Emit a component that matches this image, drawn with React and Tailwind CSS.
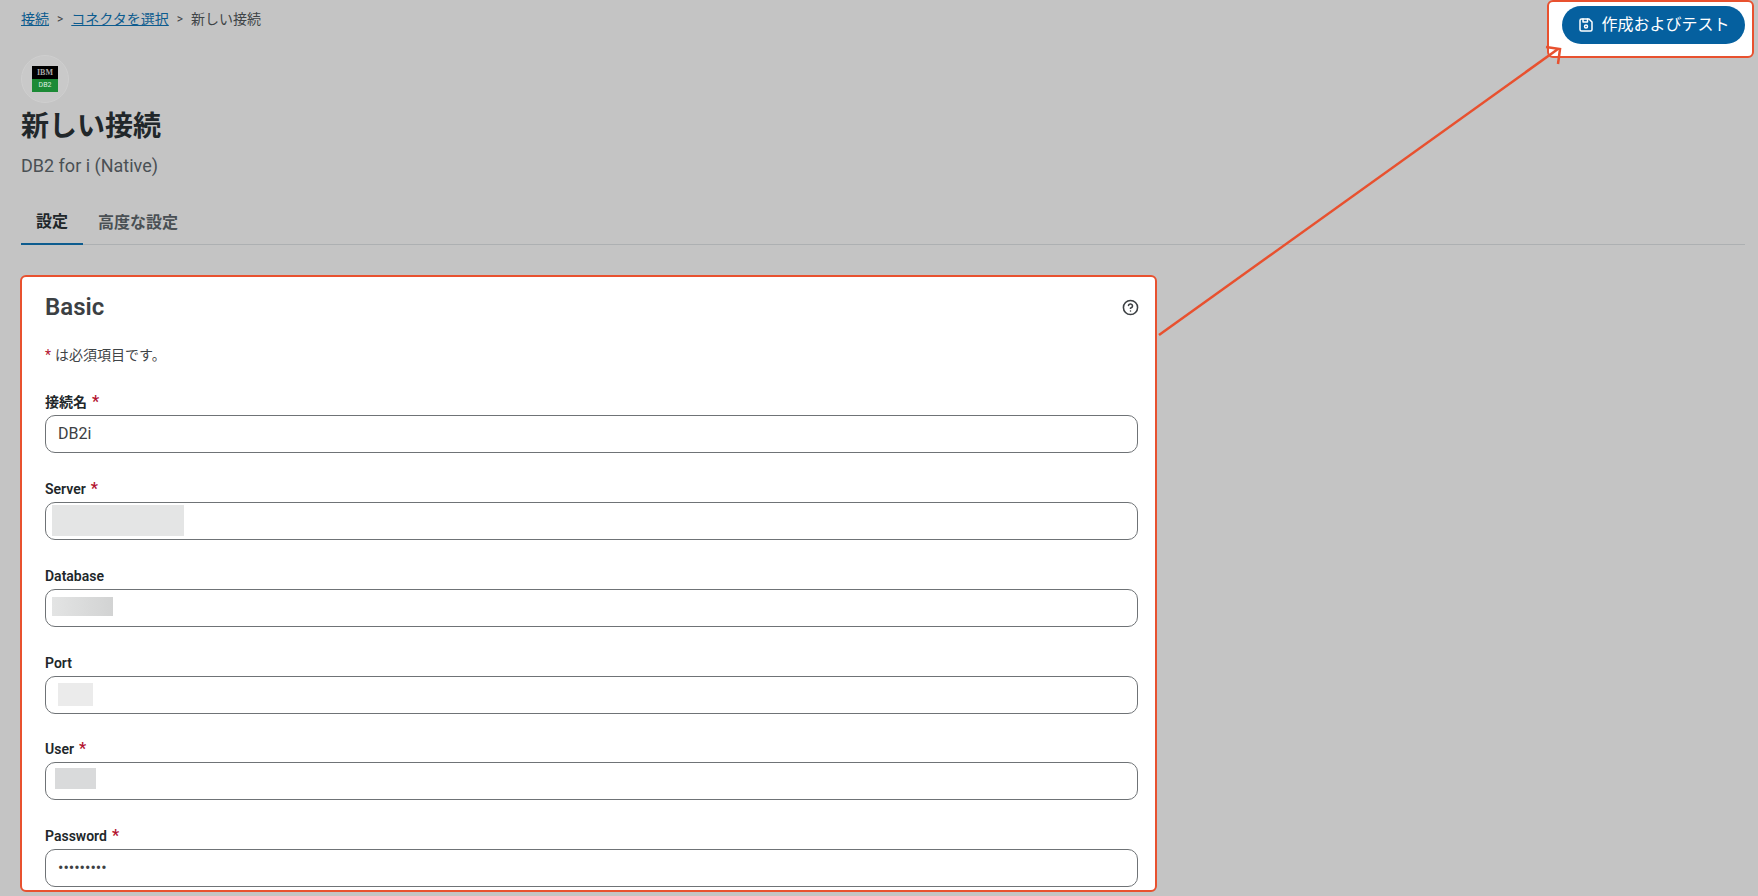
import React from 'react';
import { CircleHelp } from 'lucide-react';
import { TbDeviceFloppy } from 'react-icons/tb';

const Req = () => <span className="text-[#b3122f] text-[16px] leading-none ml-[5px]">*</span>;

const Field = ({ label, required, value, mt, children }) => (
  <div className={mt}>
    <label className="flex items-center h-[20px] text-[14px] font-semibold text-[#21272a] leading-none">
      {label}
      {required && <Req />}
    </label>
    <div className="relative flex items-center mt-[3px] h-[38px] rounded-[10px] border border-[#6f7376] bg-white px-[12px] text-[16px] text-[#3c4043]">
      {value}
      {children}
    </div>
  </div>
);

export default function App() {
  return (
    <div className="relative h-[896px] overflow-hidden bg-[#c4c4c4] pl-[21px] pr-[4px] font-['Roboto','Noto_Sans_CJK_JP',sans-serif]">
      {/* Header row */}
      <div className="flex items-start justify-between h-[55px]">
        <nav className="flex items-center gap-[8px] mt-[9px] h-[20px] text-[14px] text-[#3f4447]">
          <a className="text-[#0d5c8f] underline">接続</a>
          <span className="text-[12px]">&gt;</span>
          <a className="text-[#0d5c8f] underline">コネクタを選択</a>
          <span className="text-[12px]">&gt;</span>
          <span>新しい接続</span>
        </nav>
        <div className="flex items-start w-[207px] h-[58px] bg-white border-2 border-[#e8512f] rounded-[6px] pl-[13px] pt-[4px]">
          <button className="flex items-center justify-center gap-[6px] w-[183px] h-[38px] rounded-full bg-[#05609f] text-white text-[16px] font-normal">
            <TbDeviceFloppy className="w-[18px] h-[18px]" />
            作成およびテスト
          </button>
        </div>
      </div>

      {/* Connection heading */}
      <div className="w-[48px] h-[48px] rounded-full border border-[#cfcfcf] bg-[#c9c9c9] flex items-center justify-center">
        <div className="w-[26px] h-[26px] flex flex-col">
          <div className="h-[13px] bg-black text-[#a8a8a8] text-[8px] leading-[13px] text-center font-bold font-['Liberation_Serif',serif]">IBM</div>
          <div className="h-[13px] bg-[#1c8a36] text-[#dfeee2] text-[7px] leading-[13px] text-center">DB2</div>
        </div>
      </div>
      <h1 className="mt-[4px] h-[40px] leading-[40px] text-[28px] font-bold text-[#21272a]">新しい接続</h1>
      <p className="mt-[7px] h-[24px] leading-[24px] text-[18px] text-[#4a5054]">DB2 for i (Native)</p>

      {/* Tabs */}
      <div className="flex mt-[23px] mr-[9px] h-[44px] border-b border-[#adb0b2]">
        <div className="flex items-center justify-center w-[62px] h-[44px] border-b-2 border-[#0d5c8f] text-[16px] font-semibold text-[#21272a]">設定</div>
        <div className="flex items-center px-[15px] h-[44px] text-[16px] font-semibold text-[#4a5054]">高度な設定</div>
      </div>

      {/* Basic card */}
      <section className="mt-[30px] w-[1137px] h-[617px] ml-[-1px] bg-white border-2 border-[#e8512f] rounded-[6px] pl-[23px] pr-[16px]">
        <div className="flex items-center justify-between h-[60px]">
          <h2 className="text-[24px] font-semibold text-[#3c4043]">Basic</h2>
          <CircleHelp className="w-[17px] h-[17px] text-[#3c4043]" strokeWidth={2.2} />
        </div>
        <p className="mt-[8px] h-[20px] leading-[20px] text-[14px] text-[#3f4447]">
          <span className="text-[#b3122f] mr-[4px]">*</span>は必須項目です。
        </p>
        <div className="mr-[1px]">
          <Field label="接続名" required value="DB2i" mt="mt-[27px]" />
          <Field label="Server" required mt="mt-[26px]">
            <div className="absolute left-[6px] top-[2px] w-[132px] h-[31px] bg-[#e4e5e5]" />
          </Field>
          <Field label="Database" mt="mt-[26px]">
            <div className="absolute left-[6px] top-[7px] w-[61px] h-[19px] bg-gradient-to-r from-[#e3e4e4] to-[#d2d3d3]" />
          </Field>
          <Field label="Port" mt="mt-[26px]">
            <div className="absolute left-[12px] top-[6px] w-[35px] h-[23px] bg-[#ebebeb]" />
          </Field>
          <Field label="User" required mt="mt-[25px]">
            <div className="absolute left-[9px] top-[5px] w-[41px] h-[21px] bg-[#d9dadb]" />
          </Field>
          <Field label="Password" required value="•••••••••" mt="mt-[26px]" />
        </div>
      </section>

      {/* Annotation arrow */}
      <svg className="absolute left-0 top-0 pointer-events-none" width="1758" height="896" fill="none">
        <path d="M1159 335 L1558 49" stroke="#e8512f" strokeWidth="2.5" />
        <path d="M1546 47 L1560 49 L1558 64" stroke="#e8512f" strokeWidth="2.5" />
      </svg>
    </div>
  );
}
